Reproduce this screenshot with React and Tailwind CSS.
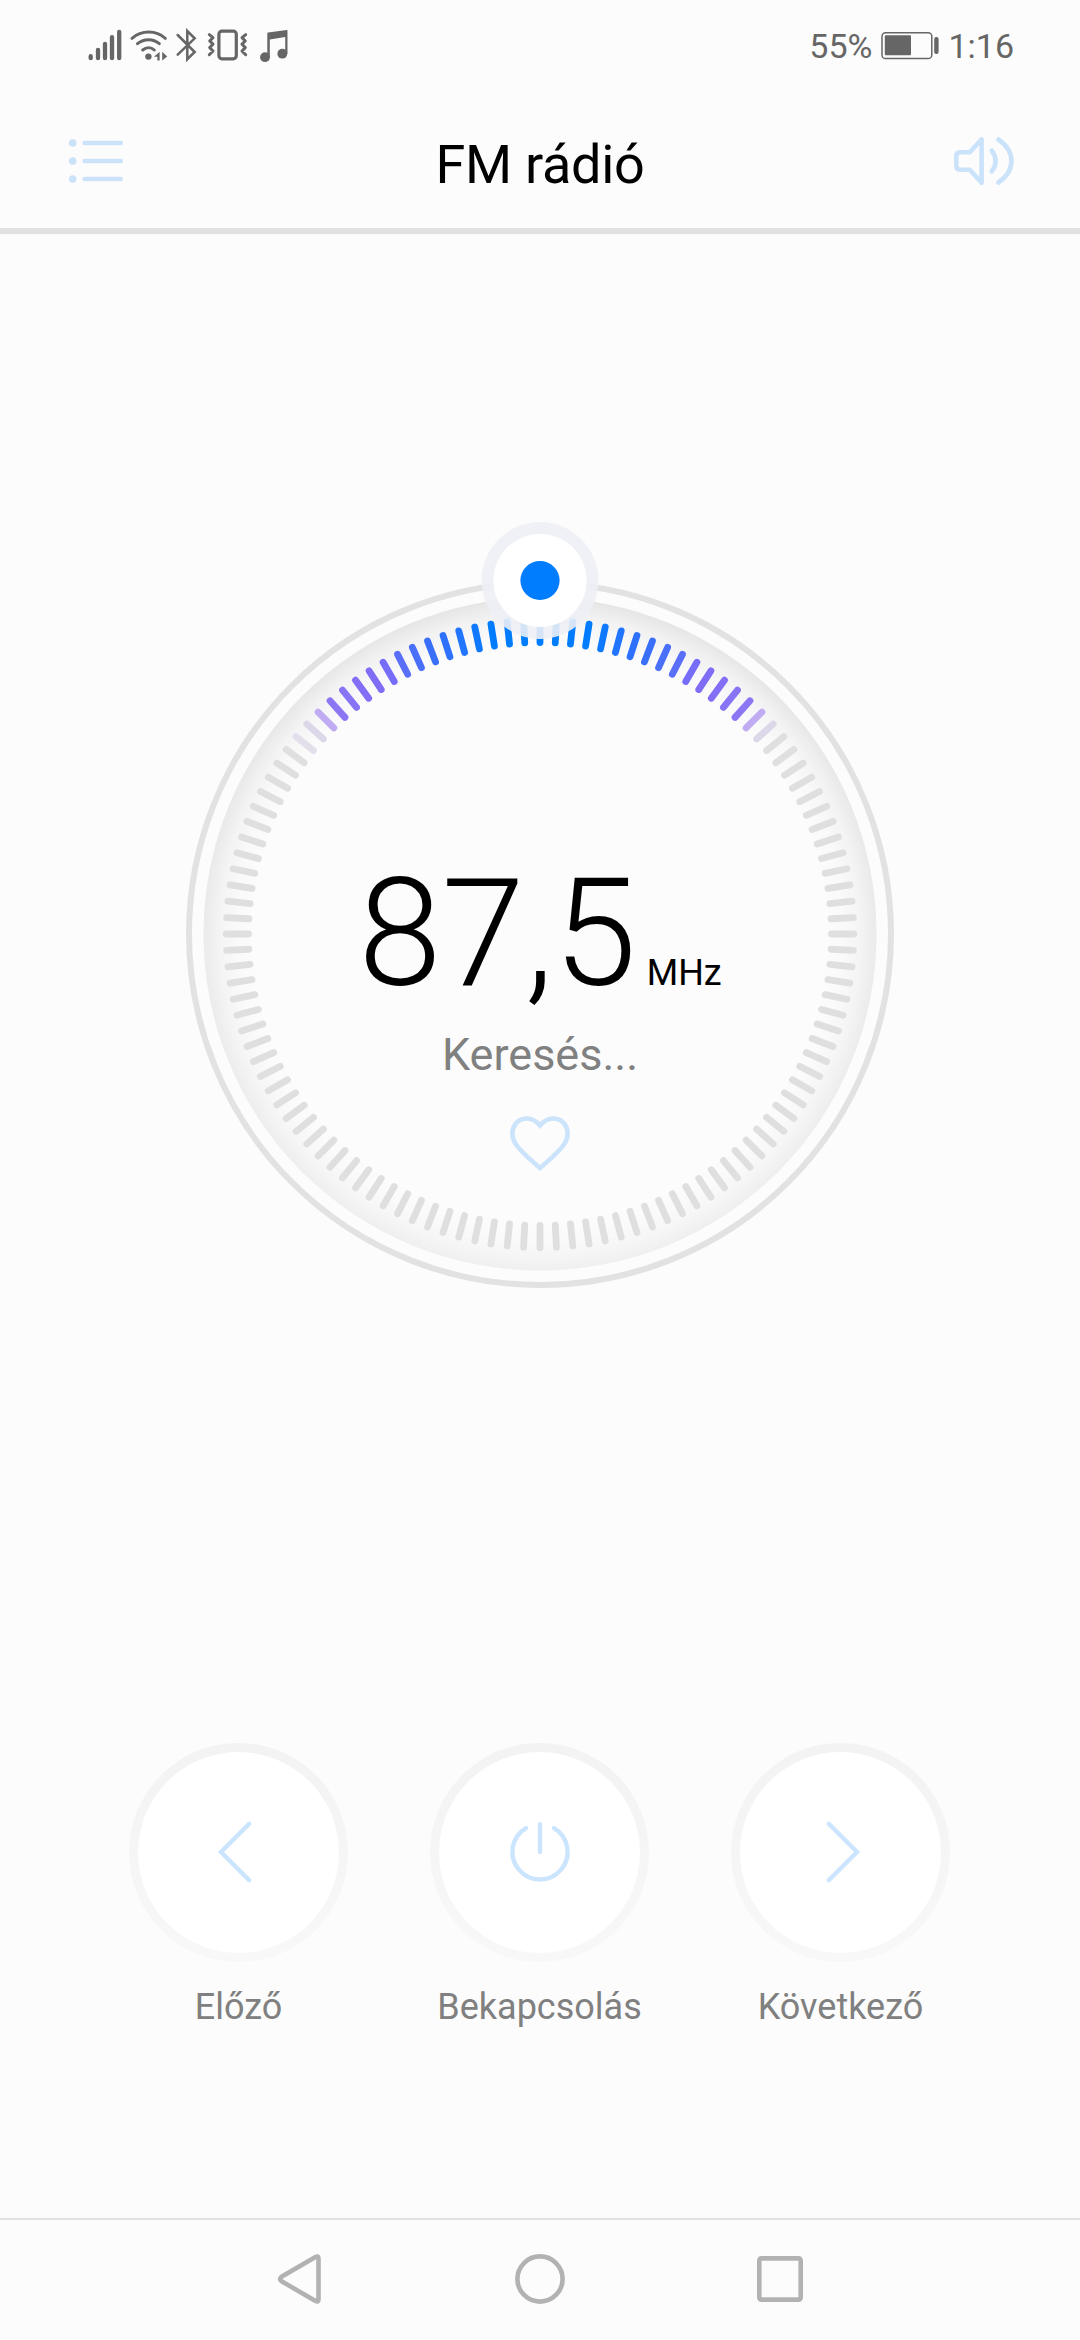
import React from "react";

// Tick colours from the top of the dial outwards, mirrored on both sides
const ACTIVE = [
  "#007dff", "#007dff", "#007dff", "#007dff", "#0f7aff", "#2275ff",
  "#2e71fd", "#3a70f9", "#4a6ff8", "#5a6ff8", "#766ef8", "#7f6df6",
  "#826ff5", "#8775f6", "#8c76f4", "#c0acf2", "#dcd8ea",
];

const ticks = Array.from({ length: 120 }, (_, i) => {
  const step = i > 60 ? 120 - i : i;
  let color = ACTIVE[step] || "#dfdfdf";
  if (i === 103) color = "#e3e0ec";
  return { angle: i * 3, color };
});

function StatusIcons() {
  return (
    <svg width="220" height="40" viewBox="80 26 220 40" fill="none" stroke="#666" strokeLinecap="round" strokeLinejoin="round">
      {/* Signal */}
      <path d="M90.7 56.2v2M98 49.8v8.4M105 43.8v14.4M112 37.2v21M119.2 31.8v26.4" strokeWidth="4.3" />
      {/* Wifi */}
      <path d="M132 38.3C141.5 30 156 30 165.3 38.3M137.500 43.700C144 38.300 153 38.300 159.300 43.700M142.700 50C146.300 47 151 47 154.300 50" strokeWidth="3" />
      <g fill="#666" stroke="none">
        <circle cx="148.4" cy="56.6" r="3.2" />
        <path d="M154 56.8l5.6-5v8.6h-2.2v-3.6zM162.2 51.8l5 4.6-5 4z" />
      </g>
      {/* Bluetooth */}
      <path d="M177.7 35l17 17-7.4 7.2V31l7.4 7.3-17 16.4" strokeWidth="2.5" strokeLinejoin="miter" />
      {/* Vibration */}
      <rect x="218.9" y="31.2" width="17.4" height="27.6" rx="3" strokeWidth="3.2" />
      <path d="M209.3 34.6l3.7 3-3.3 3.4 3.3 3.2-3.3 3.4 3.3 3.4-3.7 3.7M245.7 34.6l-3.7 3 3.3 3.4-3.3 3.2 3.3 3.4-3.3 3.4 3.7 3.7" strokeWidth="3" />
      {/* Music */}
      <g fill="#666" stroke="none">
        <circle cx="265" cy="57.2" r="4.9" />
        <circle cx="282.3" cy="53.7" r="4.9" />
        <path d="M267.3 33.4q0-.8.8-.9l18.6-2.6q.8-.1.8.8V54h-2.3V37l-15.4 2.6v18h-2.5z" />
      </g>
    </svg>
  );
}

function StatusBar() {
  return (
    <div className="flex h-[92px] items-center justify-between pr-[66px] pl-20 text-[34px] leading-none text-[#666666]">
      <StatusIcons />
      <div className="flex items-center">
        <span>55%</span>
        <svg className="mr-2 ml-2" width="60" height="30" viewBox="880 31 60 30" fill="#666">
          <rect x="882" y="32.7" width="49.8" height="25.8" rx="3.6" fill="none" stroke="#666" strokeWidth="1.5" />
          <rect x="884.8" y="35.3" width="26.2" height="20" rx="1" />
          <rect x="934.2" y="37" width="4.4" height="17" rx="2" />
        </svg>
        <span>1:16</span>
      </div>
    </div>
  );
}

function Header() {
  return (
    <header className="flex h-[142px] items-center justify-between border-b-[6px] border-[#e1e1e1] pr-[65px] pl-[67px]">
      <svg className="mt-0.5" width="62" height="52" viewBox="67 135 62 52" fill="#cbe2f9">
        {[143, 161, 179].map((y) => (
          <g key={y}>
            <circle cx="72.7" cy={y} r="3.8" />
            <rect x="82.4" y={y - 2.2} width="40.6" height="4.4" rx="2.2" />
          </g>
        ))}
      </svg>
      <h1 className="mt-[9px] text-[54px] leading-none tracking-[-0.3px] text-black">FM rádió</h1>
      <svg className="mt-0.5" width="64" height="52" viewBox="951 135 64 52" fill="none" stroke="#cae3fb" strokeWidth="4.6" strokeLinecap="round" strokeLinejoin="round">
        <path d="M969.8 152.3H960q-3.7 0-3.7 3.9v9.6q0 3.9 3.7 3.9h9.8L981.6 182.8V139.2z" />
        <path d="M991.8 150.6q7.6 10.4 0 20.8M998.4 139.5c17.4 12 17.4 31 0 43" />
      </svg>
    </header>
  );
}

function Dial() {
  return (
    <section className="relative mx-auto mt-[346px] h-[708px] w-[708px]">
      <svg className="absolute inset-0 overflow-visible" width="708" height="708" viewBox="-354 -354 708 708">
        <defs>
          <radialGradient id="rim" gradientUnits="userSpaceOnUse" cx="0" cy="0" r="336.5">
            <stop offset="0.85" stopColor="#000" stopOpacity="0" />
            <stop offset="0.9" stopColor="#000" stopOpacity="0.012" />
            <stop offset="0.95" stopColor="#000" stopOpacity="0.04" />
            <stop offset="1" stopColor="#000" stopOpacity="0.088" />
          </radialGradient>
          <linearGradient id="fade" x1="0" y1="0" x2="0" y2="1">
            <stop offset="0" stopColor="#fff" />
            <stop offset="1" stopColor="#8c8c8c" />
          </linearGradient>
          <mask id="shade" maskUnits="userSpaceOnUse" x="-340" y="-340" width="680" height="680">
            <rect x="-340" y="-340" width="680" height="680" fill="url(#fade)" />
          </mask>
        </defs>
        <circle r="351" fill="none" stroke="#e2e2e2" strokeWidth="6" />
        <circle r="336.5" fill="url(#rim)" mask="url(#shade)" />
        {ticks.map(({ angle, color }) => (
          <line
            key={angle}
            y1="-313.8"
            y2="-291.5"
            stroke={color}
            strokeWidth="6.8"
            strokeLinecap="round"
            transform={`rotate(${angle})`}
          />
        ))}
        {/* Knob */}
        <circle cy="-353.5" r="58.4" fill="#edf0f6" fillOpacity="0.9" />
        <circle cy="-353.5" r="46.6" fill="#fff" />
        <circle cy="-353.5" r="19.6" fill="#007dff" />
      </svg>

      <div className="relative flex flex-col items-center pt-[279px]">
        <div className="flex items-baseline text-black">
          <span className="text-[150px] leading-[150px] font-light">87,5</span>
          <span className="ml-[10px] text-[36px] leading-none">MHz</span>
        </div>
        <p className="mt-5 text-[45px] leading-[52px] text-[#808080]">Keresés...</p>
        <svg className="mt-[33px]" width="64" height="58" viewBox="508 1114 64 58" fill="none" stroke="#cbe3fb" strokeWidth="4.6" strokeLinejoin="miter">
          <path d="M540 1125.5C532 1116 521 1117 515.5 1124C511 1130 511.5 1138 516 1144.5C521 1151.5 530 1159.5 540 1168C550 1159.5 559 1151.5 564 1144.5C568.5 1138 569 1130 564.5 1124C559 1117 548 1116 540 1125.5z" />
        </svg>
      </div>
    </section>
  );
}

const controls = [
  { label: "Előző", path: "M41.2 1.8L13 30l28.2 28.2" },
  { label: "Bekapcsolás", path: "M31 2.3V30M17 6.1a27.6 27.6 0 1 0 28 0" },
  { label: "Következő", path: "M18.8 1.8L47 30 18.8 58.2" },
];

function Controls() {
  return (
    <section className="mt-[455px] ml-[88px] flex">
      {controls.map(({ label, path }) => (
        <div key={label} className="flex w-[301px] flex-col items-center">
          <button className="h-[219px] w-[219px] rounded-full bg-gradient-to-b from-[#f3f3f3] to-[#f8f8f8] p-[9px]">
            <span className="flex h-full w-full items-center justify-center rounded-full bg-white">
              <svg className="-mt-px -ml-px overflow-visible" width="60" height="60" viewBox="0 0 60 60" fill="none" stroke="#cce5ff" strokeWidth="4.4" strokeLinecap="round" strokeLinejoin="miter">
                <path d={path} />
              </svg>
            </span>
          </button>
          <span className="mt-[25px] text-[36px] leading-[40px] text-[#808080]">{label}</span>
        </div>
      ))}
    </section>
  );
}

function NavBar() {
  return (
    <nav className="mt-auto flex h-[122px] items-center justify-center gap-[186px] border-t-2 border-[#e1e1e1] pb-0.5">
      <svg width="54" height="54" viewBox="273 2252 54 54" fill="none" stroke="#b2b2b2" strokeWidth="4.6" strokeLinejoin="round">
        <path d="M281.5 2276.8L315.5 2257q3-1.5 3 1.6v40.8q0 3.1-3 1.6l-34-19.8q-3-2.2 0-4.4z" />
      </svg>
      <svg width="54" height="54" viewBox="0 0 54 54" fill="none" stroke="#b2b2b2" strokeWidth="4.6">
        <circle cx="27" cy="27" r="22.6" />
      </svg>
      <svg width="54" height="54" viewBox="0 0 54 54" fill="none" stroke="#b2b2b2" strokeWidth="4.6">
        <rect x="6.3" y="6.4" width="41.4" height="41.2" rx="2" />
      </svg>
    </nav>
  );
}

export default function App() {
  return (
    <div className="flex h-[2340px] w-[1080px] flex-col overflow-hidden bg-[#fcfcfc] font-['Roboto',sans-serif]">
      <StatusBar />
      <Header />
      <Dial />
      <Controls />
      <NavBar />
    </div>
  );
}
